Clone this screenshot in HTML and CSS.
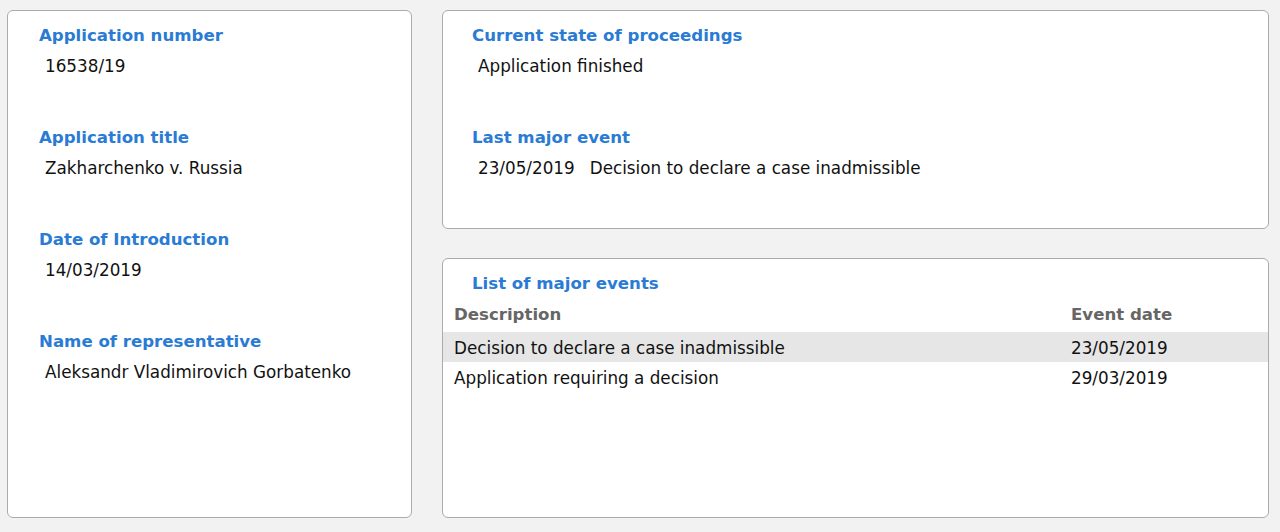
FILE: index.html
```html
<!DOCTYPE html>
<html lang="en">
<head>
    <meta charset="UTF-8">
    <title>Application details</title>
    <link rel="stylesheet" href="styles.css">
</head>
<body>
    <div class="page">
        <!-- Informations de la requête -->
        <div class="card card-info">
            <div class="field">
                <div class="label">Application number</div>
                <div class="value">16538/19</div>
            </div>
            <div class="field">
                <div class="label">Application title</div>
                <div class="value">Zakharchenko v. Russia</div>
            </div>
            <div class="field">
                <div class="label">Date of Introduction</div>
                <div class="value">14/03/2019</div>
            </div>
            <div class="field">
                <div class="label">Name of representative</div>
                <div class="value">Aleksandr Vladimirovich Gorbatenko</div>
            </div>
        </div>

        <div class="side">
            <div class="card card-state">
                <div class="field">
                    <div class="label">Current state of proceedings</div>
                    <div class="value">Application finished</div>
                </div>
                <div class="field">
                    <div class="label">Last major event</div>
                    <div class="value"><span class="event-date">23/05/2019</span>Decision to declare a case inadmissible</div>
                </div>
            </div>

            <!-- Liste des événements -->
            <div class="card card-events">
                <div class="label events-title">List of major events</div>
                <table class="events">
                    <thead>
                        <tr>
                            <th>Description</th>
                            <th class="col-date">Event date</th>
                        </tr>
                    </thead>
                    <tbody>
                        <tr class="selected">
                            <td>Decision to declare a case inadmissible</td>
                            <td class="col-date">23/05/2019</td>
                        </tr>
                        <tr>
                            <td>Application requiring a decision</td>
                            <td class="col-date">29/03/2019</td>
                        </tr>
                    </tbody>
                </table>
            </div>
        </div>
    </div>
</body>
</html>
```

FILE: styles.css
```css
body { margin: 0; background: #f2f2f2; font-family: "DejaVu Sans", Verdana, sans-serif; font-size: 16.8px; color: #111; }
.page { display: flex; gap: 30px; padding: 10px 11px 14px 7px; height: 508px; }
.card { background: #fff; border: 1px solid #ababab; border-radius: 6px; box-sizing: border-box; }
.card-info { width: 405px; padding: 15px 0 0 31px; }
.side { flex: 1; display: flex; flex-direction: column; gap: 29px; }
.card-state { height: 219px; padding: 15px 0 0 29px; }
.card-events { flex: 1; padding-top: 15px; }
.field { margin-bottom: 52.5px; }
.label { color: #2a7bd3; font-weight: bold; font-size: 16.6px; line-height: 20px; }
.value { margin-top: 9.5px; padding-left: 6px; line-height: 20px; }
.event-date { margin-right: 15px; }
.events-title { padding-left: 29px; }
.events { width: 100%; border-collapse: collapse; margin-top: 3px; }
.events th { text-align: left; color: #666; font-weight: bold; font-size: 16.6px; line-height: 30px; padding: 3px 0 2px 11px; }
.events td { line-height: 28px; padding: 2px 0 0 11px; }
.events .col-date { width: 197px; }
.events tr.selected td { background: #e6e6e6; }
```
